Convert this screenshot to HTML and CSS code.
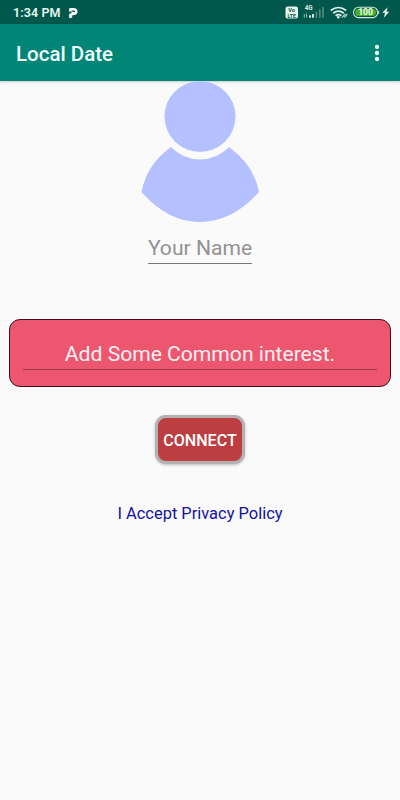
FILE: index.html
```html
<!DOCTYPE html>
<html lang="en">
<head>
<meta charset="utf-8">
<title>Local Date</title>
<link rel="stylesheet" href="styles.css">
</head>
<body>
<div class="status">
  <span class="time">1:34 PM</span>
  <svg class="parking" width="10" height="12" viewBox="0 0 10 12"><path d="M2.5 10.2V7.5M2.3 4.4V2.3H5.4Q8.3 2.3 8.3 4.6T5.4 7H4.4L4.8 4.8" fill="none" stroke="#fff" stroke-width="2.4" stroke-linejoin="round"/><path d="M1.3 6.6H4.2V10.4L1.3 11.2Z" fill="#fff"/></svg>
  <svg class="indicators" width="110" height="24" viewBox="0 0 110 24">
    <rect x="5.5" y="6.5" width="12.5" height="12" rx="2" fill="#e4f3ec"/>
    <text class="tiny" x="11.7" y="12" font-size="5.6" fill="#0a5548">Vo</text>
    <text class="tiny" x="11.7" y="17.6" font-size="5.2" fill="#0a5548">LTE</text>
    <text class="tiny" x="28.7" y="10.4" font-size="6.4" fill="#d5eae3">4G</text>
    <path d="M24.3 14v3.6M26.5 13.5v4" stroke="#a5c9bd" stroke-width=".9"/>
    <path d="M30 15.2v2.6M33 14v3.8" stroke="#e4f3ec" stroke-width="1.8"/>
    <path d="M36.4 11.8v6M39.8 9.3v8.5M43 7v10.8" stroke="#568f7e" stroke-width="1.6"/>
    <path d="M50.8 10.5q7.7-6 15.4 0M53.2 13.2q5.3-4 10.6 0M55.6 15.7q2.9-2.1 5.8 0" fill="none" stroke="#e4f3ec" stroke-width="1.7"/>
    <circle cx="58.3" cy="17.2" r="1.3" fill="#e4f3ec"/>
    <path d="M62 17.6l3.5-3.8M64.5 17.5l2.8-3.4" stroke="#b6d7ca" stroke-width="1.3"/>
    <rect x="73.6" y="7.2" width="24" height="10.4" rx="4.8" fill="#075447" stroke="#d2e9d8" stroke-width="1.1"/>
    <rect x="75.2" y="8.7" width="20.8" height="7.4" rx="3.5" fill="#49ad30"/>
    <path d="M98.7 10.8v3.2" stroke="#d2e9d8" stroke-width="1"/>
    <text class="charge" x="85.6" y="15.4">100</text>
    <path d="M107.7 7.2L102.2 12.8H105L103.8 17.8L109.3 11.7H106.5Z" fill="#e4f3ec"/>
  </svg>
</div>
<header class="appbar">
  <h1>Local Date</h1>
  <svg width="6" height="18" viewBox="0 0 6 18" fill="#f2fffb"><circle cx="3" cy="3" r="2.15"/><circle cx="3" cy="9" r="2.15"/><circle cx="3" cy="15" r="2.15"/></svg>
</header>
<main>
  <svg class="avatar" width="120" height="141" viewBox="0 0 120 141" fill="#b4c0ff">
    <circle cx="60" cy="35.5" r="35.5"/>
    <path d="M31 66Q43 78.5 60 78.5T89 66Q114 84 119 111Q92 141 60 141T1.5 111Q7 83 31 66Z"/>
  </svg>
  <div class="name"><span>Your Name</span></div>
  <div class="interest"><div class="field"><span>Add Some Common interest.</span></div></div>
  <button class="connect"><span>CONNECT</span></button>
  <a class="policy">I Accept Privacy Policy</a>
</main>
</body>
</html>
```
FILE: styles.css
```css
* { box-sizing: border-box; }
body { margin: 0; height: 800px; background: #fafafa; font-family: Roboto, sans-serif; overflow: hidden; }
.status { height: 24px; padding-left: 13px; display: flex; align-items: center; background: #00574b; color: #e8f6f1; }
.time { font-size: 12.5px; font-weight: 600; line-height: 24px; letter-spacing: .1px; width: 55px; padding-top: 2px; white-space: nowrap; }
.parking { margin-top: 1px; }
.indicators { display: block; margin-left: auto; margin-right: 10px; overflow: visible; }
.tiny { font-weight: 700; text-anchor: middle; }
.charge { font-size: 8.6px; font-weight: 700; text-anchor: middle; fill: #f2fff0; }
.appbar { height: 57px; padding: 0 20px 0 16px; display: flex; align-items: center; justify-content: space-between; background: #008577; box-shadow: 0 1px 2px rgba(0,0,0,.2); }
h1 { margin: 3px 0 0; color: #f3fffc; font-size: 20.5px; line-height: 24px; font-weight: 500; }
main { display: flex; flex-direction: column; align-items: center; }
.avatar { display: block; position: relative; }
.name { height: 42px; margin-bottom: 55px; padding-top: 12px; border-bottom: 1px solid #777; color: #929292; font-size: 21.1px; line-height: 28px; white-space: nowrap; }
.interest { width: 382px; height: 68px; padding: 20px 13px 0; border: 1px solid #450d18; border-radius: 11px; background: #ed566f; }
.field { height: 30px; border-bottom: 1px solid #943c4c; color: #fff0f3; font-size: 21.1px; line-height: 27px; text-align: center; white-space: nowrap; }
.connect { width: 90px; height: 49px; margin: 28px 0 0; padding: 2px 0 0; border: 3px solid #b2b2b2; border-radius: 11px; background: #bd3e40; color: #fff; font: 500 16.1px/22px Roboto, sans-serif; box-shadow: 0 1px 3px rgba(0,0,0,.25); }
.policy { margin-top: 39px; color: #1212a0; font-size: 16.45px; line-height: 22px; white-space: nowrap; }
```
